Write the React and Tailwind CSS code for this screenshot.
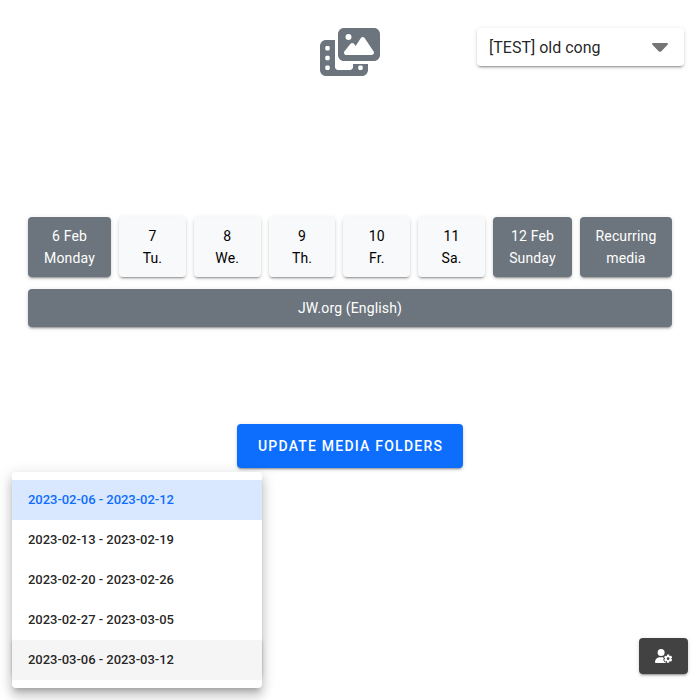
import { FaPhotoFilm, FaUserGear } from "react-icons/fa6";

const raised =
  "rounded shadow-[0_3px_1px_-2px_rgba(0,0,0,0.2),0_2px_2px_0_rgba(0,0,0,0.14),0_1px_5px_0_rgba(0,0,0,0.12)]";

const days = [
  { top: "6 Feb", bottom: "Monday", style: "w-[83px] bg-[#6c757d] text-white" },
  { top: "7", bottom: "Tu.", style: "flex-1 bg-[#f8f9fa] text-black" },
  { top: "8", bottom: "We.", style: "flex-1 bg-[#f8f9fa] text-black" },
  { top: "9", bottom: "Th.", style: "flex-1 bg-[#f8f9fa] text-black" },
  { top: "10", bottom: "Fr.", style: "flex-1 bg-[#f8f9fa] text-black" },
  { top: "11", bottom: "Sa.", style: "flex-1 bg-[#f8f9fa] text-black" },
  { top: "12 Feb", bottom: "Sunday", style: "w-[79px] bg-[#6c757d] text-white" },
  { top: "Recurring", bottom: "media", style: "w-[92px] bg-[#6c757d] text-white" },
];

const weeks = [
  { label: "2023-02-06 - 2023-02-12", style: "bg-[#d9e7ff] text-[#0d6efd]" },
  { label: "2023-02-13 - 2023-02-19", style: "text-black/87" },
  { label: "2023-02-20 - 2023-02-26", style: "text-black/87" },
  { label: "2023-02-27 - 2023-03-05", style: "text-black/87" },
  { label: "2023-03-06 - 2023-03-12", style: "bg-[#f5f5f5] text-black/87" },
];

export default function App() {
  return (
    <div className="relative flex h-[700px] w-[700px] flex-col overflow-hidden bg-white font-[Roboto,sans-serif]">
      <header className="grid grid-cols-[1fr_60px_1fr] pt-7 pr-4">
        <FaPhotoFilm className="col-start-2 ml-2 h-12 w-[60px] text-[#6c757d]" />
        <button className={`${raised} flex h-[38px] w-[207px] items-center justify-between justify-self-end bg-white pr-4 pl-3 text-base text-black/87`}>
          <span className="pt-0.5">[TEST] old cong</span>
          <svg className="mt-px h-[9px] w-4 fill-[#757575]" viewBox="0 0 16 9">
            <path d="M1.2 0h13.6c1 0 1.5 1.1.8 1.8L9.1 8.4c-.6.6-1.6.6-2.2 0L.4 1.8C-.3 1.1.2 0 1.2 0Z" />
          </svg>
        </button>
      </header>

      <main className="mt-[141px] flex flex-col px-7">
        <div className="flex gap-2">
          {days.map((day) => (
            <button
              key={day.bottom}
              className={`${raised} ${day.style} flex h-[60px] flex-col items-center justify-center text-sm leading-[22px] tracking-[0.14px]`}
            >
              <span>{day.top}</span>
              <span>{day.bottom}</span>
            </button>
          ))}
        </div>
        <button className={`${raised} mt-3 h-[38px] bg-[#6c757d] text-sm tracking-[0.14px] text-white`}>
          JW.org (English)
        </button>
        <button className={`${raised} mt-[97px] h-11 w-[226px] self-center bg-[#0d6efd] pl-px text-sm font-medium tracking-[1.22px] text-white`}>
          UPDATE MEDIA FOLDERS
        </button>
      </main>

      <footer className="mt-auto flex items-start justify-between px-3 pb-6">
        <div className={`${raised} h-[38px] w-[250px] bg-white`} />
        <button className={`${raised} flex h-9 w-[49px] items-center justify-center bg-[#424242] text-white`}>
          <FaUserGear className="h-3.5 w-[17.5px]" />
        </button>
      </footer>

      <ul className="absolute top-[472px] left-3 w-[250px] rounded bg-white py-2 shadow-[0_5px_5px_-3px_rgba(0,0,0,0.2),0_8px_10px_1px_rgba(0,0,0,0.14),0_3px_14px_2px_rgba(0,0,0,0.12)]">
        {weeks.map((week) => (
          <li
            key={week.label}
            className={`${week.style} flex h-10 items-center px-4 text-[13px] font-medium tracking-[-0.04px]`}
          >
            {week.label}
          </li>
        ))}
      </ul>
    </div>
  );
}
